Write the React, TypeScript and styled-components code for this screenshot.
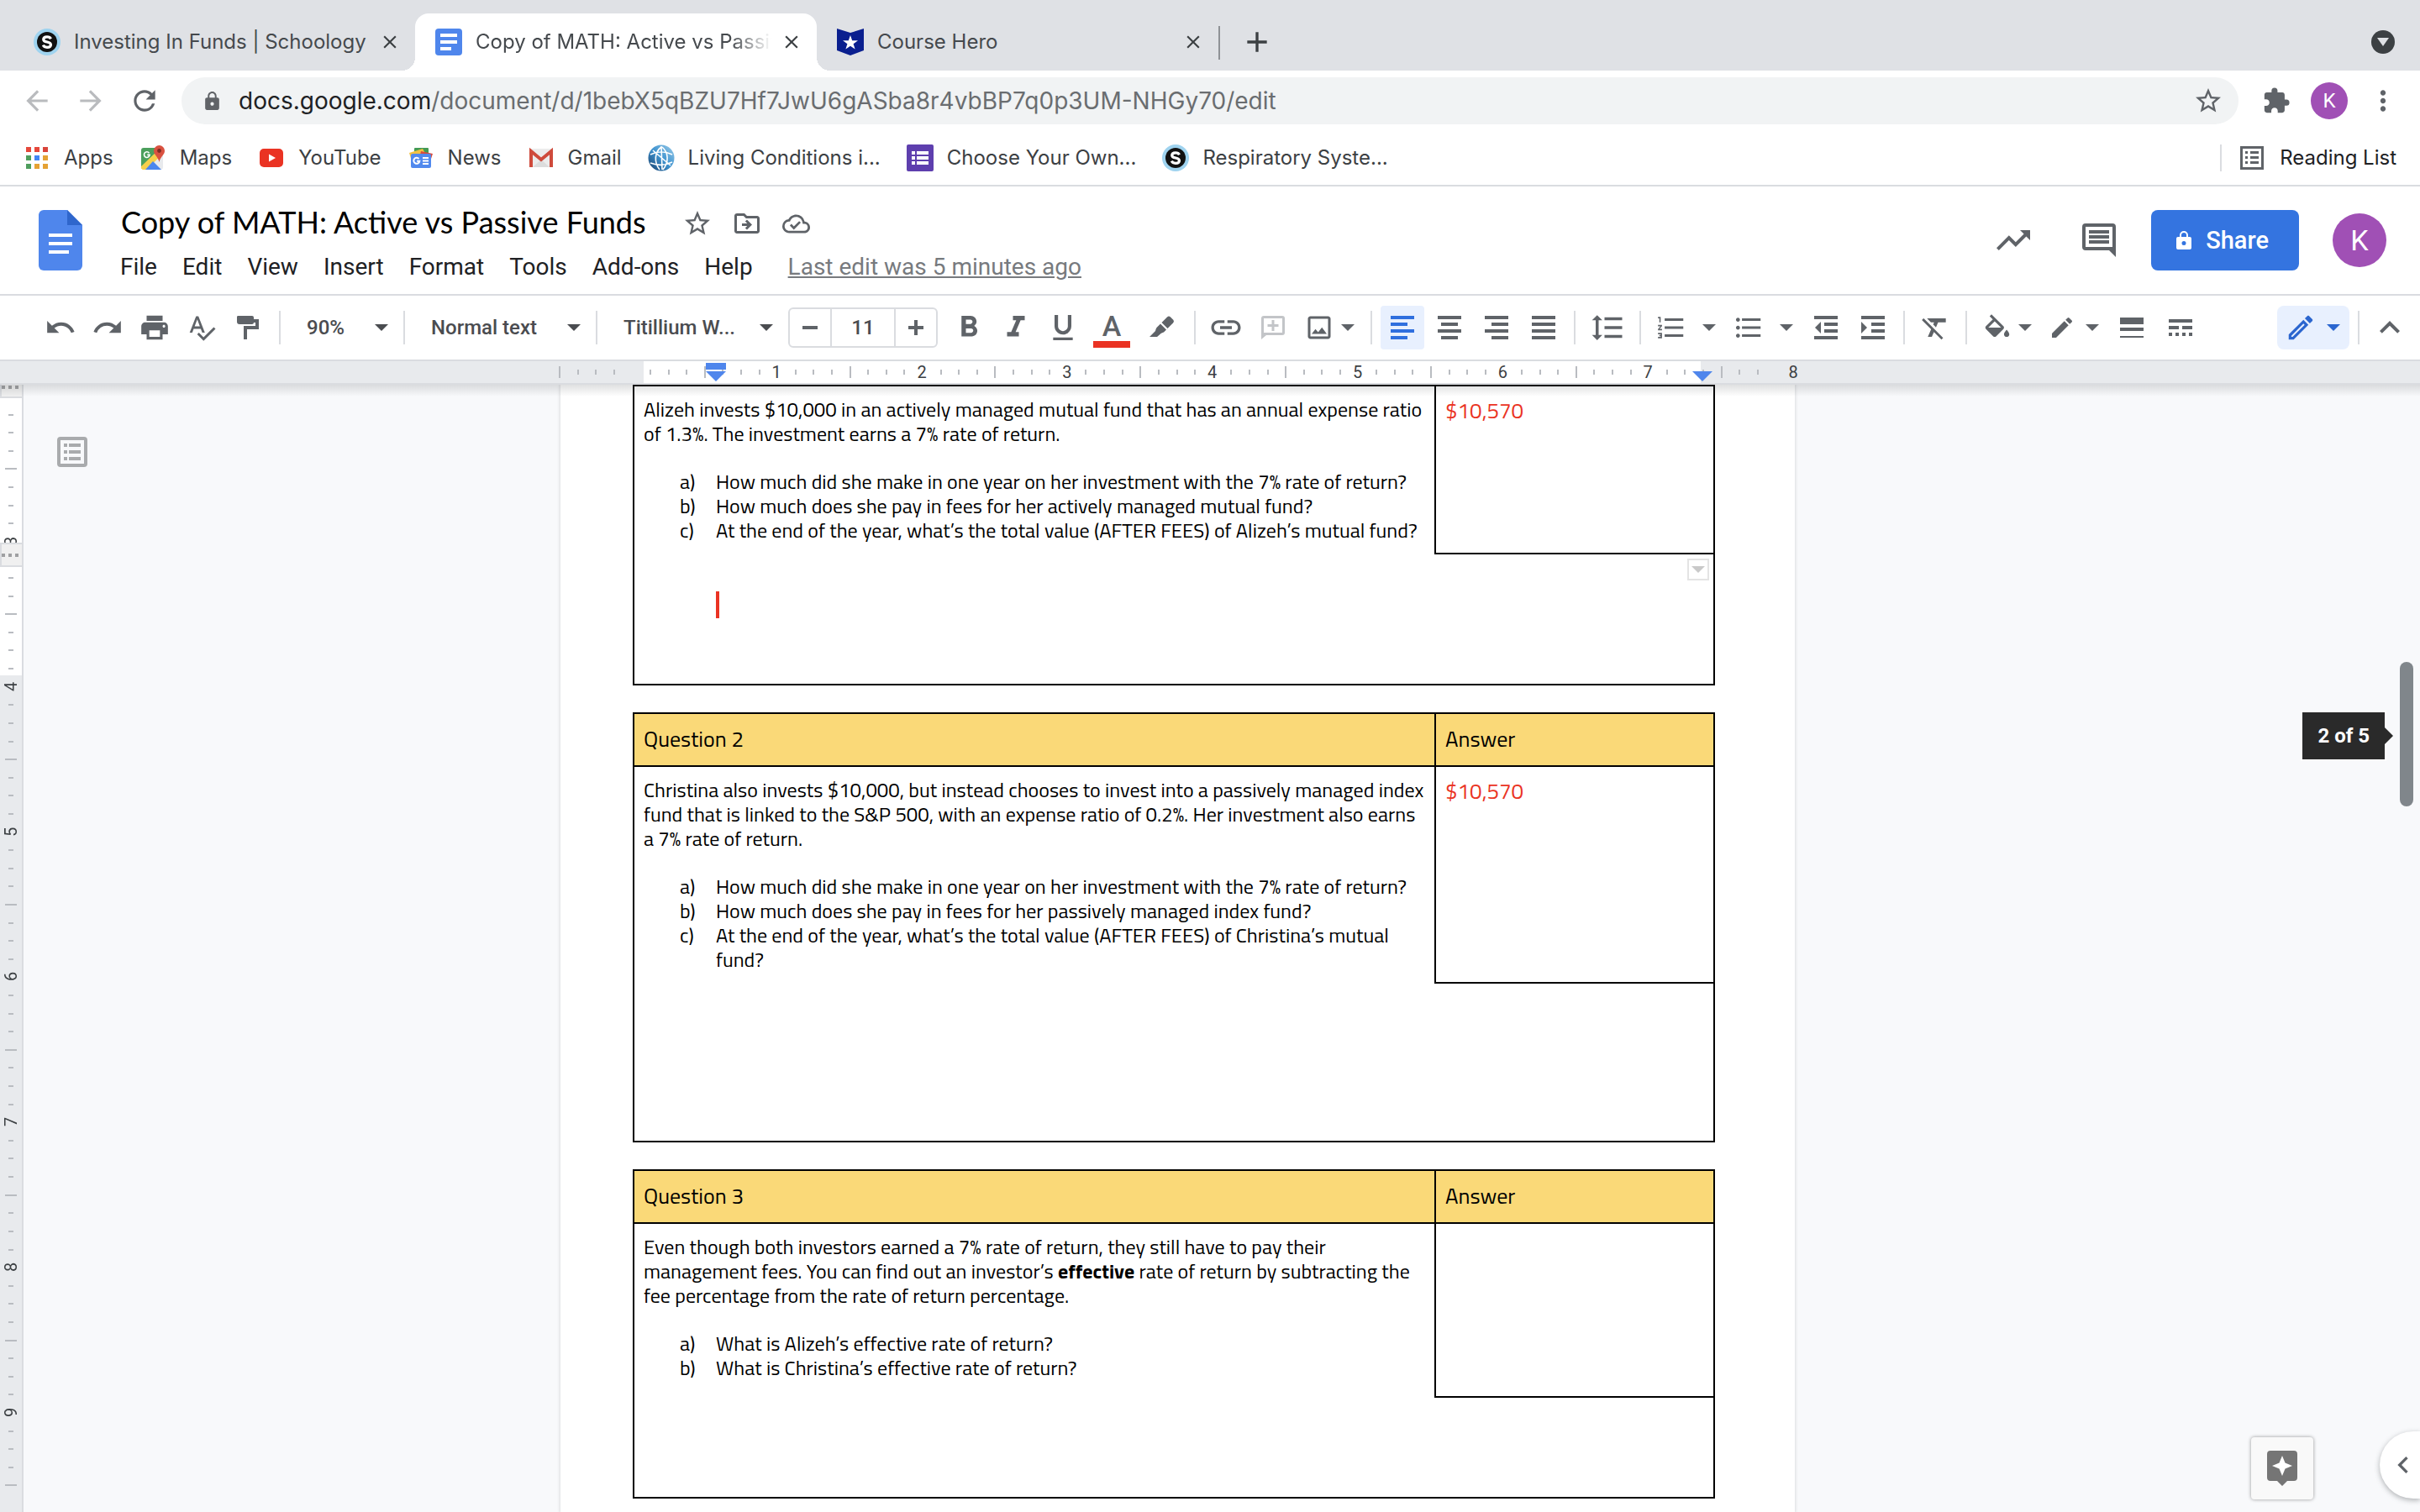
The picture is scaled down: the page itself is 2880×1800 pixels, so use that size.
import React from "react";
import styled, { createGlobalStyle, css } from "styled-components";
import {
  MdUndo,
  MdRedo,
  MdPrint,
  MdSpellcheck,
  MdFormatBold,
  MdFormatItalic,
  MdFormatUnderlined,
  MdInsertLink,
  MdOutlineImage,
  MdFormatLineSpacing,
  MdFormatListNumbered,
  MdFormatListBulleted,
  MdFormatClear,
  MdEdit,
  MdOutlineEdit,
  MdStarBorder,
  MdOutlineDriveFileMove,
  MdOutlineCloudDone,
  MdTrendingUp,
  MdExtension,
  MdLock,
  MdMoreVert,
  MdRefresh,
  MdArrowBack,
  MdArrowForward,
  MdClose,
  MdAdd,
  MdKeyboardArrowUp,
  MdChevronLeft,
} from "react-icons/md";

const c = {
  strip: "#dfe1e5",
  line: "#dadce0",
  icon: "#5f6368",
  ink: "#202124",
  tabText: "#45494d",
  blue: "#3474e0",
  logoBlue: "#4f86ec",
  purple: "#a050b5",
  canvas: "#f8f9fb",
  ruler: "#e8eaed",
  tick: "#b9bcc1",
  yellow: "#fad978",
  red: "#ea3323",
};

const browserFont = `Inter, "Liberation Sans", sans-serif`;
const uiFont = `Roboto, "Liberation Sans", sans-serif`;
const titleFont = `"Google Sans", "Product Sans", Lato, sans-serif`;
const docFont = `"Titillium Web", Roboto, sans-serif`;

const GlobalStyle = createGlobalStyle`
  * { box-sizing: border-box; }
  body { margin: 0; background: #fff; font-family: ${uiFont}; }
  button, input, select { font: inherit; color: inherit; margin: 0; padding: 0; border: 0; background: none; }
  svg { display: block; flex: none; }
`;

const Window = styled.div`
  display: flex;
  flex-direction: column;
  height: 100vh;
  min-width: 0;
  overflow: hidden;
  position: relative;
`;

/* ---------- Browser chrome ---------- */

const TabStrip = styled.div`
  display: flex;
  height: 84px;
  padding: 16px 30px 0 16px;
  background: ${c.strip};
  font: 24px/32px ${browserFont};
`;

const Tab = styled.div<{ $active?: boolean }>`
  position: relative;
  display: flex;
  align-items: center;
  width: 478px;
  padding: 0 18px 0 24px;
  color: ${c.tabText};
  ${(p) =>
    p.$active &&
    css`
      background: #fff;
      border-radius: 16px 16px 0 0;
      &::before,
      &::after {
        content: "";
        position: absolute;
        bottom: 0;
        width: 16px;
        height: 16px;
      }
      &::before {
        left: -16px;
        background: radial-gradient(circle at 0 0, transparent 16px, #fff 16px);
      }
      &::after {
        right: -16px;
        background: radial-gradient(circle at 100% 0, transparent 16px, #fff 16px);
      }
    `}
`;

const TabTitle = styled.span<{ $fade?: boolean }>`
  flex: 1;
  min-width: 0;
  margin: 0 12px 0 16px;
  overflow: hidden;
  white-space: nowrap;
  ${(p) => p.$fade && css`mask-image: linear-gradient(to right, #000 calc(100% - 48px), transparent);`}
`;

const IconButton = styled.button<{ $w?: number }>`
  display: flex;
  align-items: center;
  justify-content: center;
  width: ${(p) => p.$w ?? 56}px;
  height: 52px;
  flex: none;
  color: ${c.icon};
`;

const CloseButton = styled(IconButton)`
  width: 24px;
  color: #3c4043;
`;

const TabDivider = styled.span`
  width: 2px;
  height: 40px;
  margin-top: 15px;
  background: #8f9296;
`;

const NewTab = styled(IconButton)`
  width: 88px;
  height: 68px;
  color: #3c4043;
`;

const TabSearch = styled.button`
  width: 28px;
  height: 28px;
  margin: 20px 0 0 auto;
  border-radius: 50%;
  background: #3c4043;
  display: flex;
  align-items: center;
  justify-content: center;
`;

const NavRow = styled.div`
  display: flex;
  align-items: center;
  height: 72px;
  padding: 0 2px 0 12px;
`;

const NavButton = styled(IconButton)<{ $dim?: boolean }>`
  width: 64px;
  color: ${(p) => (p.$dim ? "#b9bbbe" : c.icon)};
`;

const Omnibox = styled.div`
  display: flex;
  align-items: center;
  flex: 1;
  height: 56px;
  margin: 0 16px 0 12px;
  padding: 0 16px 0 24px;
  border-radius: 28px;
  background: #f1f3f4;
  color: #606367;
  font: 28px/36px ${browserFont};
  min-width: 0;
`;

const Url = styled.div`
  flex: 1;
  min-width: 0;
  margin-left: 19px;
  white-space: nowrap;
  overflow: hidden;
  outline: none;
  color: #6a6d70;
`;

const Host = styled.span`
  color: ${c.ink};
`;

const Avatar = styled.button`
  width: 64px;
  height: 64px;
  flex: none;
  border-radius: 50%;
  background: ${c.purple};
  color: #fff;
  font: 34px ${uiFont};
  text-align: center;
`;

const ProfileButton = styled(Avatar)`
  width: 44px;
  height: 44px;
  margin-left: 12px;
  font-size: 24px;
`;

const Bookmarks = styled.nav`
  display: flex;
  align-items: center;
  gap: 31px;
  height: 66px;
  padding: 0 28px;
  border-bottom: 2px solid ${c.line};
  font: 24px/32px ${browserFont};
`;

const Bookmark = styled.a`
  display: flex;
  align-items: center;
  gap: 16px;
  color: #3c4043;
  text-decoration: none;
  white-space: nowrap;
`;

const ReadingList = styled.button`
  display: flex;
  align-items: center;
  gap: 19px;
  height: 32px;
  margin-left: auto;
  padding-left: 22px;
  border-left: 2px solid ${c.line};
  color: ${c.ink};
  white-space: nowrap;
`;

/* ---------- Docs header ---------- */

const Header = styled.header`
  display: flex;
  align-items: center;
  height: 130px;
  padding: 0 40px 0 46px;
  border-bottom: 2px solid ${c.line};
`;

const TitleBlock = styled.div`
  flex: 1;
  margin-left: 45px;
  padding-top: 6px;
`;

const TitleRow = styled.div`
  display: flex;
  align-items: center;
  gap: 3px;
`;

const Title = styled.h1`
  margin: 0 30px 0 1px;
  font: 36px/44px ${titleFont};
  color: #000;
  white-space: nowrap;
`;

const TitleAction = styled(IconButton)`
  height: 44px;
  padding-top: 4px;
`;

const Menus = styled.div`
  display: flex;
  gap: 30px;
  margin-top: 14px;
  font: 28px/36px ${uiFont};
  color: ${c.ink};
  white-space: nowrap;
`;

const LastEdit = styled.a`
  margin-left: 12px;
  color: #777a7e;
  text-decoration: underline;
`;

const HeaderActions = styled.div`
  display: flex;
  align-items: center;
  color: ${c.icon};
`;

const HeaderButton = styled(IconButton)`
  width: 102px;
`;

const ShareButton = styled.button`
  display: flex;
  align-items: center;
  gap: 16px;
  height: 72px;
  margin: 0 40px 0 11px;
  padding: 0 36px 0 29px;
  border-radius: 8px;
  background: ${c.blue};
  color: #fff;
  font: 500 29px/36px ${uiFont};
`;

/* ---------- Toolbar ---------- */

const Toolbar = styled.div`
  display: flex;
  align-items: center;
  height: 78px;
  padding: 0 8px 0 44px;
  border-bottom: 2px solid ${c.line};
  color: ${c.icon};
`;

const Sep = styled.span`
  flex: none;
  width: 2px;
  height: 40px;
  margin: 0 8px;
  background: ${c.line};
`;

const Picker = styled.label<{ $w: number }>`
  display: flex;
  align-items: center;
  flex: none;
  width: ${(p) => p.$w}px;
  padding: 0 10px 0 23px;
  font: 500 24px/32px ${uiFont};
  color: #4a4c50;
`;

const Select = styled.select`
  flex: 1;
  min-width: 0;
  appearance: none;
  outline: none;
`;

const SizeBox = styled.div`
  display: flex;
  flex: none;
  width: 178px;
  height: 48px;
  margin: 0 9px 0 8px;
  border: 2px solid ${c.line};
  border-radius: 6px;
`;

const SizeButton = styled.button`
  display: flex;
  align-items: center;
  justify-content: center;
  width: 48px;
`;

const SizeInput = styled.input`
  flex: 1;
  min-width: 0;
  border: solid ${c.line};
  border-width: 0 2px;
  text-align: center;
  font: 500 24px/32px ${uiFont};
  color: #4a4c50;
`;

const TextColor = styled.span`
  width: 44px;
  margin-top: 4px;
  border-bottom: 8px solid ${c.red};
  font: 500 34px/36px ${uiFont};
  text-align: center;
`;

const Toggle = styled(IconButton)<{ $on?: boolean }>`
  width: 52px;
  margin: 0 2px;
  border-radius: 4px;
  background: ${(p) => (p.$on ? "#e8f0fe" : "none")};
  color: ${(p) => (p.$on ? "#2f6fde" : c.icon)};
`;

const SplitButton = styled(IconButton)`
  justify-content: space-between;
  padding: 0 11px 0 9px;
`;

const ModeButton = styled(SplitButton)`
  width: 86px;
  margin: 0 2px 0 auto;
  border-radius: 8px;
  background: #e8f0fe;
  color: #2b66cf;
`;

/* ---------- Rulers ---------- */

const RulerBar = styled.div`
  display: flex;
  justify-content: center;
  height: 28px;
  flex: none;
  padding: 0 109px 0 28px;
  background: ${c.ruler};
  border-bottom: 2px solid ${c.line};
`;

const RulerScale = styled.div`
  position: relative;
  display: grid;
  grid-template-columns: repeat(68, 1fr);
  width: 1469px;
  flex: none;
  background: linear-gradient(to right, transparent 101px, #fff 101px 1359px, transparent 1359px);
  font: 20px/26px ${uiFont};
  color: #3c4043;
`;

const HTick = styled.span<{ $major?: boolean }>`
  width: 2px;
  height: ${(p) => (p.$major ? 14 : 6)}px;
  margin-top: ${(p) => (p.$major ? 6 : 10)}px;
  background: ${c.tick};
`;

const HLabel = styled.span<{ $last?: boolean }>`
  display: flex;
  justify-content: center;
  width: 0;
  justify-self: ${(p) => (p.$last ? "end" : "start")};
`;

const Marker = styled.svg<{ $x: number }>`
  position: absolute;
  left: ${(p) => p.$x}px;
  bottom: 0;
`;

const VRuler = styled.div`
  position: relative;
  width: 28px;
  flex: none;
  padding-top: 13px;
  overflow: hidden;
  border-right: 2px solid ${c.line};
  background: linear-gradient(to bottom, #fff 346px, ${c.ruler} 346px);
`;

const VScale = styled.div`
  display: grid;
  grid-template-rows: repeat(61, 1fr);
  height: 1318px;
  font: 20px/24px ${uiFont};
  color: #3c4043;
`;

const VTick = styled.span<{ $major?: boolean }>`
  height: 2px;
  width: ${(p) => (p.$major ? 14 : 6)}px;
  margin-left: ${(p) => (p.$major ? 6 : 10)}px;
  background: ${c.tick};
`;

const VLabel = styled.span`
  display: flex;
  align-items: center;
  height: 0;
  writing-mode: vertical-rl;
  transform: rotate(180deg);
  justify-content: center;
  width: 26px;
`;

const RowHandle = styled.span<{ $y: number; $h: number }>`
  position: absolute;
  left: 0;
  top: ${(p) => p.$y}px;
  width: 26px;
  height: ${(p) => p.$h}px;
  border: solid ${c.line};
  border-width: 2px 0 2px 2px;
  background: repeating-linear-gradient(to right, #9fa0a2 0 4px, transparent 4px 8px) 0 50% / 100% 4px no-repeat #f0f0f0;
`;

/* ---------- Document ---------- */

const Workspace = styled.div`
  position: relative;
  display: flex;
  flex: 1;
  min-height: 0;
  overflow: hidden;
  background: ${c.canvas};
`;

const TopShade = styled.div`
  position: absolute;
  inset: 0 0 auto 0;
  height: 14px;
  background: linear-gradient(to bottom, rgba(60, 64, 67, 0.16), rgba(60, 64, 67, 0));
`;

const OutlineButton = styled.button`
  position: absolute;
  left: 68px;
  top: 62px;
  color: #a9abad;
`;

const Scroller = styled.main`
  display: flex;
  justify-content: center;
  flex: 1;
  min-width: 0;
  padding-right: 105px;
`;

const Paper = styled.article`
  width: 1469px;
  flex: none;
  padding: 0 95px 0 86px;
  background: #fff;
  box-shadow: 0 0 3px 1px rgba(60, 64, 67, 0.15);
  font: 24px/29px ${docFont};
  color: #000;
`;

const QTable = styled.table`
  width: 100%;
  margin-bottom: 32px;
  border-collapse: collapse;
  table-layout: fixed;
`;

const AnswerCol = styled.col`
  width: 332px;
`;

const Th = styled.th`
  height: 63px;
  padding: 0 11px 3px;
  border: 2px solid #000;
  background: ${c.yellow};
  font-size: 26px;
  font-weight: 400;
  text-align: left;
`;

const QuestionCell = styled.td<{ $h: number }>`
  height: ${(p) => p.$h}px;
  padding: 13px 10px 11px 11px;
  border: 2px solid #000;
  border-bottom: 0;
  vertical-align: top;
`;

const AnswerCell = styled.td`
  padding: 14px 11px 10px;
  border: 2px solid #000;
  vertical-align: top;
  font-size: 26px;
  color: ${c.red};
`;

const WorkCell = styled.td<{ $h: number }>`
  height: ${(p) => p.$h}px;
  padding: 0;
  border: 2px solid #000;
  border-top: 0;
  vertical-align: top;
`;

const WorkArea = styled.div`
  display: flex;
  justify-content: space-between;
  padding: 5px 5px 0 97px;
`;

const Caret = styled.span`
  width: 4px;
  height: 32px;
  margin-top: 39px;
  background: ${c.red};
`;

const CellMenu = styled.button`
  display: flex;
  align-items: center;
  justify-content: center;
  width: 26px;
  height: 26px;
  border: 2px solid #e4e4e4;
  color: #c9c9c9;
`;

const Prompt = styled.p`
  margin: 0 0 28px;
`;

const Parts = styled.ol`
  margin: 0;
  padding: 0 0 0 43px;
  list-style: none;
  counter-reset: part;
`;

const Part = styled.li`
  display: flex;
  counter-increment: part;
  &::before {
    content: counter(part, lower-alpha) ")";
    width: 43px;
    flex: none;
  }
`;

/* ---------- Floating controls ---------- */

const ScrollThumb = styled.div`
  position: absolute;
  right: 8px;
  top: 330px;
  width: 16px;
  height: 172px;
  border-radius: 8px;
  background: #80868b;
`;

const PageTip = styled.div`
  position: absolute;
  right: 42px;
  top: 390px;
  padding: 12px 18px;
  background: #2a2a2a;
  color: #fff;
  font: 700 24px/32px ${uiFont};
  box-shadow: 0 0 0 2px #fff;
  &::after {
    content: "";
    position: absolute;
    left: 100%;
    top: 18px;
    border: 10px solid transparent;
    border-left-color: #2a2a2a;
    border-right-width: 0;
  }
`;

const Explore = styled.button`
  position: absolute;
  right: 127px;
  bottom: 15px;
  display: flex;
  align-items: center;
  justify-content: center;
  width: 74px;
  height: 74px;
  border-radius: 4px;
  background: #f9f9f9;
  box-shadow: 0 0 4px rgba(0, 0, 0, 0.4);
`;

const SideTab = styled.button`
  position: absolute;
  right: 0;
  bottom: 16px;
  display: flex;
  align-items: center;
  width: 48px;
  height: 80px;
  padding-left: 8px;
  border-radius: 40px 0 0 40px;
  background: #fff;
  color: ${c.icon};
  box-shadow: 0 2px 6px rgba(60, 64, 67, 0.4);
`;

/* ---------- Drawn icons ---------- */

const Arrow = () => (
  <svg width="16" height="8" viewBox="0 0 16 8" fill="currentColor">
    <path d="M0 0h16L8 8z" />
  </svg>
);

const Bars = ({ rows }: { rows: [number, number][] }) => (
  <svg width="28" height="28" fill="currentColor">
    {rows.map(([x, w], i) => (
      <rect key={i} x={x} y={i * 8} width={w} height="4" />
    ))}
  </svg>
);

const Indent = ({ out }: { out?: boolean }) => (
  <svg width="28" height="28" fill="currentColor">
    <path d="M0 0h28v4H0zM12 8h16v4H12zM12 16h16v4H12zM0 24h28v4H0z" />
    <path d={out ? "M8 7v14l-7-7z" : "M0 7v14l7-7z"} />
  </svg>
);

const Schoology = () => (
  <svg width="32" height="32" viewBox="0 0 32 32">
    <circle cx="16" cy="16" r="16" fill="#9fd3ef" />
    <circle cx="16" cy="16" r="12" fill="#111" />
    <path
      d="M20.5 12.2c-.8-1.700-2.500-2.400-4.500-2.400-2.500 0-4.300 1.200-4.300 3.100 0 4.300 8.800 2 8.800 6.300 0 1.900-1.900 3.100-4.500 3.100-2.200 0-4-.9-4.700-2.600"
      fill="none"
      stroke="#fff"
      strokeWidth="3.200"
    />
  </svg>
);

const DocsFavicon = () => (
  <svg width="32" height="32">
    <rect width="32" height="32" rx="4" fill={c.logoBlue} />
    <path d="M6 6h20v4H6zM6 14h20v4H6zM6 22h13v4H6z" fill="#fff" />
  </svg>
);

const FormsIcon = () => (
  <svg width="32" height="32">
    <rect width="32" height="32" rx="2" fill="#5e3fae" />
    <path d="M6 8h4v4H6zM12 8h14v4H12zM6 14h4v4H6zM12 14h14v4H12zM6 20h4v4H6zM12 20h14v4H12z" fill="#fff" />
  </svg>
);

const CourseHero = () => (
  <svg width="32" height="32">
    <path d="M0 0l16 5L32 0v26l-16 6-16-6z" fill="#0a1f8f" />
    <path d="M16 8l2.200 6.200H25l-5.400 4 2 6.400-5.600-3.900-5.600 3.900 2-6.400-5.400-4h6.800z" fill="#fff" />
  </svg>
);

const AppsIcon = () => {
  const colors = ["#e5483b", "#e5483b", "#d9443a", "#4f9e5d", "#4285f4", "#e5a234", "#4f9e5d", "#e5a234", "#e5a234"];
  return (
    <svg width="32" height="32">
      {colors.map((f, i) => (
        <rect key={i} x={3 + (i % 3) * 10} y={3 + Math.floor(i / 3) * 10} width="6" height="6" fill={f} />
      ))}
    </svg>
  );
};

const MapsIcon = () => (
  <svg width="32" height="32">
    <rect x="2" y="4" width="26" height="26" rx="3" fill="#e8eaed" />
    <path d="M5 4h17v8L3 29a3 3 0 0 1-1-2V7a3 3 0 0 1 3-3z" fill="#4b9f5c" />
    <path d="M2 26L22 7l5 5L8 30H5a3 3 0 0 1-3-4z" fill="#f6cf4b" />
    <path d="M7 30l9-10 10 10z" fill="#4b86ee" />
    <path d="M11.500 10.200a3.300 3.300 0 1 0 .6 2.200H9.300" fill="none" stroke="#fff" strokeWidth="1.600" />
    <path d="M23.500 1a6.500 6.500 0 0 0-6.500 6.500c0 5 5 6.500 6.500 13.500 1.500-7 6.500-8.500 6.500-13.500A6.500 6.500 0 0 0 23.500 1z" fill="#d95140" />
    <circle cx="23.500" cy="7.500" r="2.400" fill="#7d2a20" />
  </svg>
);

const YouTubeIcon = () => (
  <svg width="32" height="32">
    <rect x="2" y="5" width="28" height="22" rx="5" fill="#ea3323" />
    <path d="M13 11.500v9l8-4.500z" fill="#fff" />
  </svg>
);

const NewsIcon = () => (
  <svg width="32" height="32">
    <rect x="8" y="4" width="17" height="10" rx="1" fill="#439a54" />
    <path d="M2 10l16-5 5 9-18 6z" fill="#f2c142" />
    <path d="M16 8l14 3-4 12-12-6z" fill="#d94b3d" />
    <rect x="4" y="11" width="24" height="17" rx="2" fill="#5189ee" />
    <path d="M13.500 17a3.500 3.500 0 1 0 .8 2.800h-3.200M18 16h7M18 19.500h7M18 23h7" fill="none" stroke="#fff" strokeWidth="2" />
  </svg>
);

const GmailIcon = () => (
  <svg width="32" height="32">
    <rect x="2" y="5" width="28" height="22" rx="2" fill="#ececec" />
    <path d="M6 27l10-9 10 9z" fill="#dcdcdc" />
    <path d="M4 27V8l12 10L28 8v19" fill="none" stroke="#cf4b3c" strokeWidth="4" />
  </svg>
);

const GlobeIcon = () => (
  <svg width="32" height="32">
    <defs>
      <linearGradient id="sea" x1="0" y1="1" x2="1" y2="0">
        <stop offset="0" stopColor="#173f6b" />
        <stop offset="0.5" stopColor="#3f93cf" />
        <stop offset="1" stopColor="#9ccdea" />
      </linearGradient>
    </defs>
    <circle cx="16" cy="16" r="15.500" fill="url(#sea)" />
    <path
      d="M16 3c-8 6-9 18-2 27M17 3c8 7 8 18 1 27M3 12c8-4 18-4 26 0M3 22c8 3 18 3 26-1M16 2l1 28M6 7l21 18"
      fill="none"
      stroke="#fff"
      strokeWidth="1.600"
    />
  </svg>
);

const ReadingIcon = () => (
  <svg width="28" height="28" fill={c.icon}>
    <path d="M0 0h28v28H0zM3 3v22h22V3z" fillRule="evenodd" />
    <path d="M6 6h3v3H6zM12 6h10v3H12zM6 12h3v3H6zM12 12h10v3H12zM6 18h3v3H6zM12 18h10v3H12z" />
  </svg>
);

const OutlineIcon = () => (
  <svg width="36" height="36" fill="currentColor">
    <path d="M4 0h28a4 4 0 0 1 4 4v28a4 4 0 0 1-4 4H4a4 4 0 0 1-4-4V4a4 4 0 0 1 4-4zM4 4v28h28V4z" fillRule="evenodd" />
    <path d="M8 8h4v4H8zM14 8h14v4H14zM8 16h4v4H8zM14 16h14v4H14zM8 24h4v4H8zM14 24h14v4H14z" />
  </svg>
);

const DocsLogo = () => (
  <svg width="52" height="72">
    <path d="M6 0h28l18 18v48a6 6 0 0 1-6 6H6a6 6 0 0 1-6-6V6a6 6 0 0 1 6-6z" fill={c.logoBlue} />
    <path d="M34 0l18 18H34z" fill="#2f66cc" />
    <path d="M12 28h28v4H12zM12 38h28v4H12zM12 48h24v4H12z" fill="#fff" />
  </svg>
);

const PaintRoller = () => (
  <svg width="28" height="28" fill="currentColor">
    <path d="M3 0h15a2 2 0 0 1 2 2v2h6v12H12v12H8V12h14V8h-2a2 2 0 0 1-2 2H3a3 3 0 0 1-3-3V2a2 2 0 0 1 3-2z" />
  </svg>
);

const Highlighter = () => (
  <svg width="30" height="28" viewBox="0 0 30 28" fill="currentColor">
    <path d="M21 1.500a3 3 0 0 1 4 0l3 3a3 3 0 0 1 0 4l-6.500 6.500-7-7z" />
    <path d="M13 9.500l7 7-3 3c-2 1-3 .5-4.500 2.500L9 25H0l7-7c.5-2 1-4 3-5.500z" />
  </svg>
);

const AddCommentIcon = () => (
  <svg width="28" height="28" fill="#c3c5c8">
    <path d="M3 0h22a3 3 0 0 1 3 3v17a3 3 0 0 1-3 3H6l-6 5V3a3 3 0 0 1 3-3zM3 3v17h22V3z" fillRule="evenodd" />
    <path d="M12.500 5h3v5h5v3h-5v5h-3v-5h-5v-3h5z" />
  </svg>
);

const CommentIcon = () => (
  <svg width="40" height="40" fill="currentColor">
    <path d="M4 0h32a4 4 0 0 1 4 4v36l-8-8H4a4 4 0 0 1-4-4V4a4 4 0 0 1 4-4zM4 4v24h32V4z" fillRule="evenodd" />
    <path d="M8 8h24v4H8zM8 14h24v4H8zM8 20h24v4H8z" />
  </svg>
);

const LockIcon = () => (
  <svg width="20" height="24" viewBox="0 0 20 24" fill="#fff">
    <path
      d="M3 8h2V6a5 5 0 0 1 10 0v2h2a2 2 0 0 1 2 2v11a2 2 0 0 1-2 2H3a2 2 0 0 1-2-2V10a2 2 0 0 1 2-2zM7 8h6V6a3 3 0 0 0-6 0zM10 13a2.500 2.500 0 1 0 0 5 2.500 2.500 0 0 0 0-5z"
      fillRule="evenodd"
    />
  </svg>
);

const BucketIcon = () => (
  <svg width="38" height="38" viewBox="0 -2 24 24" fill="currentColor">
    <path d="M16.560 8.940L7.620 0 6.210 1.410l2.380 2.380-5.150 5.150c-.59.59-.59 1.540 0 2.120l5.500 5.500c.29.29.68.44 1.060.44s.77-.15 1.060-.44l5.500-5.500c.59-.58.59-1.530 0-2.120zM5.210 10L10 5.210 14.790 10H5.210zM19 11.500s-2 2.170-2 3.500c0 1.100.9 2 2 2s2-.9 2-2c0-1.330-2-3.500-2-3.500z" />
  </svg>
);

const BorderWidthIcon = () => (
  <svg width="28" height="24" fill="currentColor">
    <path d="M0 0h28v8H0zM0 12h28v4H0zM0 22h28v2H0z" />
  </svg>
);

const BorderDashIcon = () => (
  <svg width="28" height="20" fill="currentColor">
    <path d="M0 0h28v4H0zM0 8h12v4H0zM16 8h12v4H16zM0 16h4v4H0zM8 16h4v4H8zM16 16h4v4h-4zM24 16h4v4h-4z" />
  </svg>
);

const ExploreIcon = () => (
  <svg width="36" height="42" fill="#757575">
    <path d="M4 0h28a4 4 0 0 1 4 4v28a4 4 0 0 1-4 4h-8l-6 6-6-6H4a4 4 0 0 1-4-4V4a4 4 0 0 1 4-4z" />
    <path d="M18 6l3.500 8.500L30 18l-8.500 3.500L18 30l-3.500-8.500L6 18l8.500-3.500z" fill="#fff" />
  </svg>
);

/* ---------- Data ---------- */

const bookmarks: [string, React.ReactNode][] = [
  ["Apps", <AppsIcon />],
  ["Maps", <MapsIcon />],
  ["YouTube", <YouTubeIcon />],
  ["News", <NewsIcon />],
  ["Gmail", <GmailIcon />],
  ["Living Conditions i...", <GlobeIcon />],
  ["Choose Your Own...", <FormsIcon />],
  ["Respiratory Syste...", <Schoology />],
];

const menus = ["File", "Edit", "View", "Insert", "Format", "Tools", "Add-ons", "Help"];

interface Question {
  title?: string;
  prompt: React.ReactNode;
  parts: string[];
  answer: string;
  height: number;
  work: number;
  editing?: boolean;
}

const questions: Question[] = [
  {
    prompt:
      "Alizeh invests $10,000 in an actively managed mutual fund that has an annual expense ratio of 1.3%. The investment earns a 7% rate of return.",
    parts: [
      "How much did she make in one year on her investment with the 7% rate of return?",
      "How much does she pay in fees for her actively managed mutual fund?",
      "At the end of the year, what’s the total value (AFTER FEES) of Alizeh’s mutual fund?",
    ],
    answer: "$10,570",
    height: 200,
    work: 156,
    editing: true,
  },
  {
    title: "Question 2",
    prompt:
      "Christina also invests $10,000, but instead chooses to invest into a passively managed index fund that is linked to the S&P 500, with an expense ratio of 0.2%. Her investment also earns a 7% rate of return.",
    parts: [
      "How much did she make in one year on her investment with the 7% rate of return?",
      "How much does she pay in fees for her passively managed index fund?",
      "At the end of the year, what’s the total value (AFTER FEES) of Christina’s mutual fund?",
    ],
    answer: "$10,570",
    height: 258,
    work: 189,
  },
  {
    title: "Question 3",
    prompt: (
      <>
        Even though both investors earned a 7% rate of return, they still have to pay their management fees. You can
        find out an investor’s <b>effective</b> rate of return by subtracting the fee percentage from the rate of return
        percentage.
      </>
    ),
    parts: ["What is Alizeh’s effective rate of return?", "What is Christina’s effective rate of return?"],
    answer: "",
    height: 207,
    work: 120,
  },
];

const QuestionTable = ({ q }: { q: Question }) => (
  <QTable>
    <colgroup>
      <col />
      <AnswerCol />
    </colgroup>
    {q.title && (
      <thead>
        <tr>
          <Th scope="col">{q.title}</Th>
          <Th scope="col">Answer</Th>
        </tr>
      </thead>
    )}
    <tbody>
      <tr>
        <QuestionCell $h={q.height}>
          <Prompt>{q.prompt}</Prompt>
          <Parts>
            {q.parts.map((p) => (
              <Part key={p}>{p}</Part>
            ))}
          </Parts>
        </QuestionCell>
        <AnswerCell>{q.answer}</AnswerCell>
      </tr>
      <tr>
        <WorkCell colSpan={2} $h={q.work}>
          {q.editing && (
            <WorkArea>
              <Caret />
              <CellMenu aria-label="Cell options">
                <Arrow />
              </CellMenu>
            </WorkArea>
          )}
        </WorkCell>
      </tr>
    </tbody>
  </QTable>
);

const eighths = Array.from({ length: 68 }, (_, i) => i);

const HorizontalRuler = () => (
  <RulerBar>
    <RulerScale>
      {eighths.map((i) => {
        const pos = i - 4;
        if (i === 67) {
          return (
            <HLabel key={i} $last>
              8
            </HLabel>
          );
        }
        if (pos % 8 === 0) return <HLabel key={i}>{pos > 0 ? pos / 8 : ""}</HLabel>;
        return <HTick key={i} $major={pos % 4 === 0} />;
      })}
      <Marker $x={175} width="24" height="24" fill={c.logoBlue}>
        <path d="M0 0h24v8H0zM0 10h24L12 22z" />
      </Marker>
      <Marker $x={1349} width="24" height="14" fill={c.logoBlue}>
        <path d="M0 0h24L12 12z" />
      </Marker>
    </RulerScale>
  </RulerBar>
);

const VerticalRuler = () => (
  <VRuler>
    <VScale>
      {Array.from({ length: 61 }, (_, i) => {
        const inch = 2 + i / 8;
        if (i % 8 === 0) return <VLabel key={i}>{inch > 2 ? inch : ""}</VLabel>;
        return <VTick key={i} $major={i % 4 === 0} />;
      })}
    </VScale>
    <RowHandle $y={-10} $h={26} />
    <RowHandle $y={188} $h={29} />
  </VRuler>
);

export default function App() {
  return (
    <Window>
      <GlobalStyle />
      <TabStrip>
        <Tab>
          <Schoology />
          <TabTitle>Investing In Funds | Schoology</TabTitle>
          <CloseButton aria-label="Close tab">
            <MdClose size={26} />
          </CloseButton>
        </Tab>
        <Tab $active>
          <DocsFavicon />
          <TabTitle $fade>Copy of MATH: Active vs Passive Funds</TabTitle>
          <CloseButton aria-label="Close tab">
            <MdClose size={26} />
          </CloseButton>
        </Tab>
        <Tab>
          <CourseHero />
          <TabTitle>Course Hero</TabTitle>
          <CloseButton aria-label="Close tab">
            <MdClose size={26} />
          </CloseButton>
        </Tab>
        <TabDivider />
        <NewTab aria-label="New tab">
          <MdAdd size={40} />
        </NewTab>
        <TabSearch aria-label="Search tabs">
          <svg width="14" height="10" fill="#dfe1e5">
            <path d="M0 0h14L7 10z" />
          </svg>
        </TabSearch>
      </TabStrip>

      <NavRow>
        <NavButton $dim aria-label="Back">
          <MdArrowBack size={38} />
        </NavButton>
        <NavButton $dim aria-label="Forward">
          <MdArrowForward size={38} />
        </NavButton>
        <NavButton aria-label="Reload">
          <MdRefresh size={38} />
        </NavButton>
        <Omnibox>
          <MdLock size={25} />
          <Url role="textbox" aria-label="Address">
            <Host>docs.google.com</Host>/document/d/1bebX5qBZU7Hf7JwU6gASba8r4vbBP7q0p3UM-NHGy70/edit
          </Url>
          <IconButton $w={40} aria-label="Bookmark this page">
            <MdStarBorder size={36} />
          </IconButton>
        </Omnibox>
        <IconButton $w={58} aria-label="Extensions">
          <MdExtension size={34} />
        </IconButton>
        <ProfileButton>K</ProfileButton>
        <IconButton $w={84} aria-label="Browser menu">
          <MdMoreVert size={38} />
        </IconButton>
      </NavRow>

      <Bookmarks>
        {bookmarks.map(([name, icon]) => (
          <Bookmark key={name} href="#">
            {icon}
            {name}
          </Bookmark>
        ))}
        <ReadingList>
          <ReadingIcon />
          Reading List
        </ReadingList>
      </Bookmarks>

      <Header>
        <DocsLogo />
        <TitleBlock>
          <TitleRow>
            <Title>Copy of MATH: Active vs Passive Funds</Title>
            <TitleAction aria-label="Star">
              <MdStarBorder size={36} />
            </TitleAction>
            <TitleAction aria-label="Move">
              <MdOutlineDriveFileMove size={36} />
            </TitleAction>
            <TitleAction aria-label="Saved to Drive">
              <MdOutlineCloudDone size={33} />
            </TitleAction>
          </TitleRow>
          <Menus>
            {menus.map((m) => (
              <button key={m}>{m}</button>
            ))}
            <LastEdit href="#">Last edit was 5 minutes ago</LastEdit>
          </Menus>
        </TitleBlock>
        <HeaderActions>
          <HeaderButton aria-label="Activity">
            <MdTrendingUp size={48} />
          </HeaderButton>
          <HeaderButton aria-label="Comments">
            <CommentIcon />
          </HeaderButton>
          <ShareButton>
            <LockIcon />
            Share
          </ShareButton>
          <Avatar>K</Avatar>
        </HeaderActions>
      </Header>

      <Toolbar>
        <IconButton aria-label="Undo"><MdUndo size={38} /></IconButton>
        <IconButton aria-label="Redo"><MdRedo size={38} /></IconButton>
        <IconButton aria-label="Print"><MdPrint size={38} /></IconButton>
        <IconButton aria-label="Spelling"><MdSpellcheck size={36} /></IconButton>
        <IconButton aria-label="Paint format"><PaintRoller /></IconButton>
        <Sep />
        <Picker $w={130}>
          <Select aria-label="Zoom"><option>90%</option></Select>
          <Arrow />
        </Picker>
        <Sep />
        <Picker $w={211}>
          <Select aria-label="Styles"><option>Normal text</option></Select>
          <Arrow />
        </Picker>
        <Sep />
        <Picker $w={211}>
          <Select aria-label="Font"><option>Titillium W...</option></Select>
          <Arrow />
        </Picker>
        <SizeBox>
          <SizeButton aria-label="Decrease font size">
            <svg width="18" height="18" fill="currentColor"><path d="M0 7h18v4H0z" /></svg>
          </SizeButton>
          <SizeInput aria-label="Font size" defaultValue="11" />
          <SizeButton aria-label="Increase font size">
            <svg width="18" height="18" fill="currentColor"><path d="M7 0h4v7h7v4h-7v7H7v-7H0V7h7z" /></svg>
          </SizeButton>
        </SizeBox>
        <IconButton aria-label="Bold"><MdFormatBold size={42} /></IconButton>
        <IconButton aria-label="Italic"><MdFormatItalic size={42} /></IconButton>
        <IconButton aria-label="Underline"><MdFormatUnderlined size={40} /></IconButton>
        <IconButton $w={60} aria-label="Text color"><TextColor>A</TextColor></IconButton>
        <IconButton $w={60} aria-label="Highlight color"><Highlighter /></IconButton>
        <Sep />
        <IconButton aria-label="Insert link"><MdInsertLink size={42} /></IconButton>
        <IconButton aria-label="Add comment"><AddCommentIcon /></IconButton>
        <SplitButton $w={80} aria-label="Insert image"><MdOutlineImage size={36} /><Arrow /></SplitButton>
        <Sep />
        <Toggle $on aria-label="Left align"><Bars rows={[[0, 28], [0, 20], [0, 28], [0, 20]]} /></Toggle>
        <Toggle aria-label="Center align"><Bars rows={[[0, 28], [4, 20], [0, 28], [4, 20]]} /></Toggle>
        <Toggle aria-label="Right align"><Bars rows={[[0, 28], [8, 20], [0, 28], [8, 20]]} /></Toggle>
        <Toggle aria-label="Justify"><Bars rows={[[0, 28], [0, 28], [0, 28], [0, 28]]} /></Toggle>
        <Sep />
        <IconButton $w={60} aria-label="Line spacing"><MdFormatLineSpacing size={42} /></IconButton>
        <Sep />
        <SplitButton $w={92} aria-label="Numbered list"><MdFormatListNumbered size={38} /><Arrow /></SplitButton>
        <SplitButton $w={92} aria-label="Bulleted list"><MdFormatListBulleted size={38} /><Arrow /></SplitButton>
        <IconButton aria-label="Decrease indent"><Indent out /></IconButton>
        <IconButton aria-label="Increase indent"><Indent /></IconButton>
        <Sep />
        <IconButton aria-label="Clear formatting"><MdFormatClear size={38} /></IconButton>
        <Sep />
        <SplitButton $w={80} aria-label="Background color"><BucketIcon /><Arrow /></SplitButton>
        <SplitButton $w={80} aria-label="Border color"><MdEdit size={32} /><Arrow /></SplitButton>
        <IconButton aria-label="Border width"><BorderWidthIcon /></IconButton>
        <IconButton $w={60} aria-label="Border dash"><BorderDashIcon /></IconButton>
        <ModeButton aria-label="Editing mode"><MdOutlineEdit size={38} /><Arrow /></ModeButton>
        <Sep />
        <IconButton aria-label="Hide the menus"><MdKeyboardArrowUp size={48} /></IconButton>
      </Toolbar>

      <HorizontalRuler />

      <Workspace>
        <VerticalRuler />
        <Scroller>
          <Paper>
            {questions.map((q, i) => (
              <QuestionTable key={i} q={q} />
            ))}
          </Paper>
        </Scroller>
        <TopShade />
        <OutlineButton aria-label="Show outline">
          <OutlineIcon />
        </OutlineButton>
        <ScrollThumb />
        <PageTip role="tooltip">2 of 5</PageTip>
        <Explore aria-label="Explore">
          <ExploreIcon />
        </Explore>
        <SideTab aria-label="Show side panel">
          <MdChevronLeft size={40} />
        </SideTab>
      </Workspace>
    </Window>
  );
}
